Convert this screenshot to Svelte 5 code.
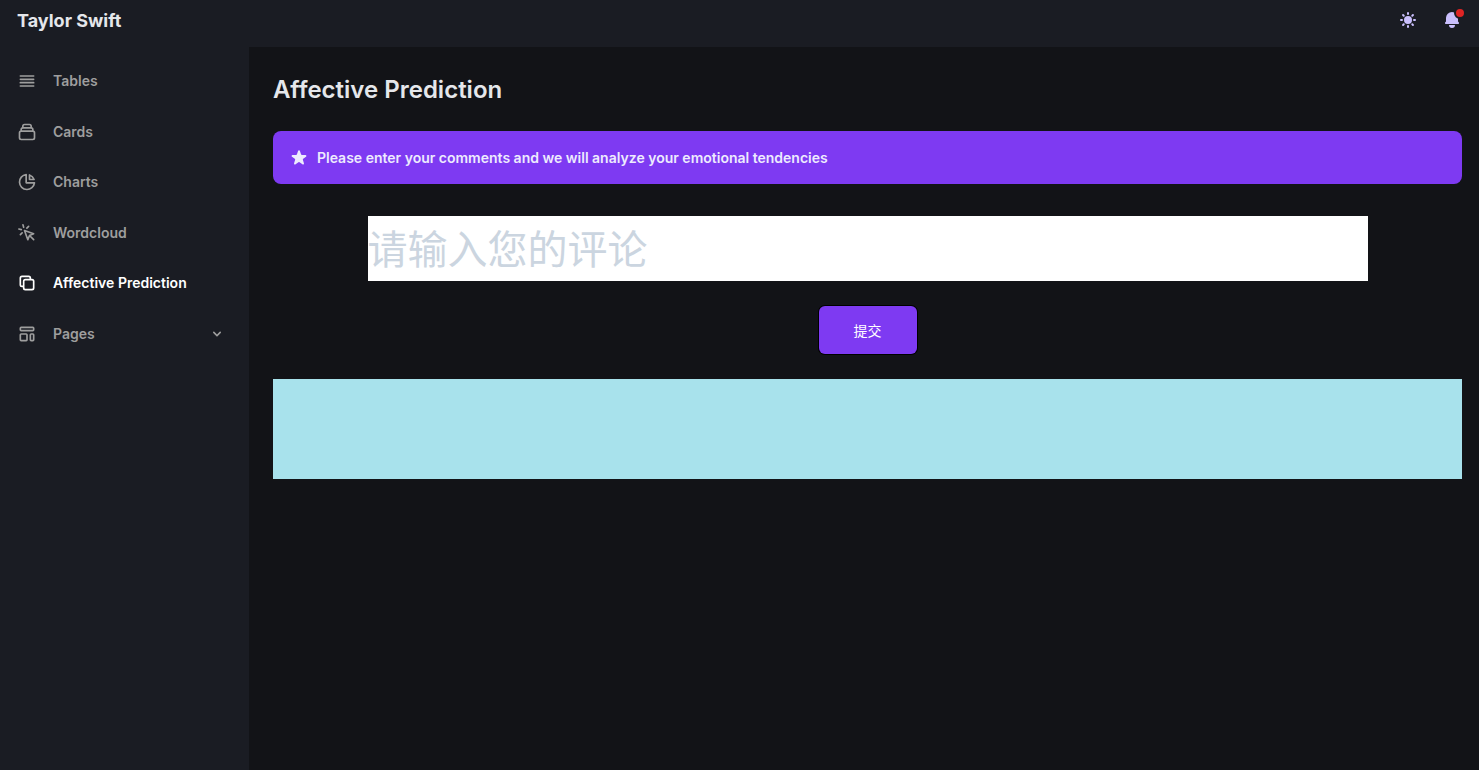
<script>
  const items = [
    { label: 'Tables', paths: ['M4 6h16M4 10h16M4 14h16M4 18h16'] },
    {
      label: 'Cards',
      paths: [
        'M19 11H5m14 0a2 2 0 012 2v6a2 2 0 01-2 2H5a2 2 0 01-2-2v-6a2 2 0 012-2m14 0V9a2 2 0 00-2-2M5 11V9a2 2 0 012-2m0 0V5a2 2 0 012-2h6a2 2 0 012 2v2M7 7h10'
      ]
    },
    {
      label: 'Charts',
      paths: [
        'M11 3.055A9.001 9.001 0 1020.945 13H11V3.055z',
        'M20.488 9H15V3.512A9.025 9.025 0 0120.488 9z'
      ]
    },
    {
      label: 'Wordcloud',
      paths: [
        'M15 15l-2 5L9 9l11 4-5 2zm0 0l5 5M7.188 2.239l.777 2.897M5.136 7.965l-2.898-.777M13.95 4.05l-2.122 2.122m-5.657 5.656l-2.12 2.122'
      ]
    },
    {
      label: 'Affective Prediction',
      active: true,
      paths: [
        'M8 16H6a2 2 0 01-2-2V6a2 2 0 012-2h8a2 2 0 012 2v2m-6 12h8a2 2 0 002-2v-8a2 2 0 00-2-2h-8a2 2 0 00-2 2v8a2 2 0 002 2z'
      ]
    }
  ];
  const pagesPath =
    'M4 5a1 1 0 011-1h14a1 1 0 011 1v2a1 1 0 01-1 1H5a1 1 0 01-1-1V5zM4 13a1 1 0 011-1h6a1 1 0 011 1v6a1 1 0 01-1 1H5a1 1 0 01-1-1v-6zM16 13a1 1 0 011-1h2a1 1 0 011 1v6a1 1 0 01-1 1h-2a1 1 0 01-1-1v-6z';
  let comment = $state('');
</script>

{#snippet lineIcon(paths)}
  <svg class="icon line" viewBox="0 0 24 24" aria-hidden="true">
    {#each paths as d}<path {d} />{/each}
  </svg>
{/snippet}

<div class="shell">
  <header>
    <a class="brand" href="#home">Taylor Swift</a>
    <div class="actions">
      <button class="icon-button" aria-label="Toggle color mode">
        <svg class="icon" viewBox="0 0 20 20" aria-hidden="true">
          <path fill-rule="evenodd" clip-rule="evenodd" d="M10 2a1 1 0 011 1v1a1 1 0 11-2 0V3a1 1 0 011-1zm4 8a4 4 0 11-8 0 4 4 0 018 0zm-.464 4.95l.707.707a1 1 0 001.414-1.414l-.707-.707a1 1 0 00-1.414 1.414zm2.12-10.607a1 1 0 010 1.414l-.706.707a1 1 0 11-1.414-1.414l.707-.707a1 1 0 011.414 0zM17 11a1 1 0 100-2h-1a1 1 0 100 2h1zm-7 4a1 1 0 011 1v1a1 1 0 11-2 0v-1a1 1 0 011-1zM5.05 6.464A1 1 0 106.465 5.05l-.708-.707a1 1 0 00-1.414 1.414l.707.707zm1.414 8.486l-.707.707a1 1 0 01-1.414-1.414l.707-.707a1 1 0 011.414 1.414zM4 11a1 1 0 100-2H3a1 1 0 000 2h1z" />
        </svg>
      </button>
      <button class="icon-button" aria-label="Notifications">
        <svg class="icon" viewBox="0 0 20 20" aria-hidden="true">
          <path d="M10 2a6 6 0 00-6 6v3.586l-.707.707A1 1 0 004 14h12a1 1 0 00.707-1.707L16 11.586V8a6 6 0 00-6-6zM10 18a3 3 0 01-3-3h6a3 3 0 01-3 3z" />
        </svg>
        <span class="badge"></span>
      </button>
    </div>
  </header>

  <div class="body">
    <nav>
      <ul>
        {#each items as item}
          <li>
            <a href="#{item.label}" class:active={item.active} aria-current={item.active ? 'page' : undefined}>
              {@render lineIcon(item.paths)}
              <span>{item.label}</span>
            </a>
          </li>
        {/each}
        <li>
          <button class="group" aria-expanded="false">
            {@render lineIcon([pagesPath])}
            <span>Pages</span>
            <svg class="chevron" viewBox="0 0 20 20" aria-hidden="true">
              <path fill-rule="evenodd" clip-rule="evenodd" d="M5.293 7.293a1 1 0 011.414 0L10 10.586l3.293-3.293a1 1 0 111.414 1.414l-4 4a1 1 0 01-1.414 0l-4-4a1 1 0 010-1.414z" />
            </svg>
          </button>
        </li>
      </ul>
    </nav>

    <main>
      <h1>Affective Prediction</h1>
      <div class="banner">
        <svg class="icon" viewBox="0 0 20 20" aria-hidden="true">
          <path d="M9.049 2.927c.3-.921 1.603-.921 1.902 0l1.07 3.292a1 1 0 00.95.69h3.462c.969 0 1.371 1.24.588 1.81l-2.8 2.034a1 1 0 00-.364 1.118l1.07 3.292c.3.921-.755 1.688-1.54 1.118l-2.8-2.034a1 1 0 00-1.175 0l-2.8 2.034c-.784.57-1.838-.197-1.539-1.118l1.07-3.292a1 1 0 00-.364-1.118L2.98 8.72c-.783-.57-.38-1.81.588-1.81h3.461a1 1 0 00.951-.69l1.07-3.292z" />
        </svg>
        <span>Please enter your comments and we will analyze your emotional tendencies</span>
      </div>
      <form onsubmit={(e) => e.preventDefault()}>
        <input type="text" bind:value={comment} placeholder="请输入您的评论" aria-label="请输入您的评论" />
        <button class="submit" type="submit">提交</button>
      </form>
      <output class="result"></output>
    </main>
  </div>
</div>

<style>
  :global(body) {
    margin: 0;
    background: #121317;
  }
  * {
    box-sizing: border-box;
  }
  .shell {
    display: flex;
    flex-direction: column;
    min-height: 100vh;
    font-family: Inter, 'Noto Sans CJK SC', sans-serif;
    font-size: 14px;
    line-height: 20px;
    color: #e5e7eb;
  }
  button,
  input {
    font: inherit;
    border: 0;
    margin: 0;
  }
  a {
    color: inherit;
    text-decoration: none;
  }
  button {
    cursor: pointer;
  }
  .icon {
    display: block;
    flex: none;
    width: 20px;
    height: 20px;
    fill: currentColor;
  }
  .line {
    fill: none;
    stroke: currentColor;
    stroke-width: 2;
    stroke-linecap: round;
    stroke-linejoin: round;
  }
  header {
    display: flex;
    align-items: flex-start;
    justify-content: space-between;
    height: 47px;
    padding: 7px 17px 0;
    background: #1a1c23;
  }
  .brand {
    font-size: 18px;
    line-height: 28px;
    font-weight: 700;
  }
  .actions {
    display: flex;
    gap: 24px;
    padding-top: 2px;
  }
  .icon-button {
    position: relative;
    padding: 0;
    background: none;
    color: #cabffd;
  }
  .icon-button:last-child {
    padding-top: 1px;
  }
  .badge {
    position: absolute;
    top: -2px;
    right: -4px;
    width: 12px;
    height: 12px;
    border: 2px solid #1a1c23;
    border-radius: 50%;
    background: #e02424;
  }
  .body {
    display: flex;
    flex: 1;
  }
  nav {
    flex: none;
    width: 249px;
    padding-top: 9px;
    background: #1a1c23;
    color: #9e9e9e;
    font-weight: 600;
  }
  ul {
    list-style: none;
    margin: 0;
    padding: 0;
  }
  li a,
  .group {
    display: flex;
    align-items: center;
    gap: 16px;
    width: 100%;
    padding: 15px 24px 15px 17px;
  }
  li:nth-child(odd) {
    padding-bottom: 1px;
  }
  .active {
    color: #ffffff;
  }
  .group {
    background: none;
    color: inherit;
  }
  .chevron {
    width: 16px;
    height: 16px;
    margin-left: auto;
    fill: currentColor;
  }
  main {
    flex: 1;
    min-width: 0;
    padding: 25px 17px 24px 24px;
    background: #121317;
  }
  h1 {
    margin: 0 0 23px;
    font-size: 24px;
    line-height: 36px;
    font-weight: 600;
  }
  .banner {
    display: flex;
    align-items: center;
    gap: 8px;
    padding: 16px;
    min-height: 53px;
    border-radius: 8px;
    background: #7e3af2;
    color: #edebfe;
    font-weight: 600;
  }
  form {
    display: flex;
    flex-direction: column;
    align-items: center;
    gap: 25px;
    padding: 32px 0 25px;
  }
  input {
    width: 100%;
    max-width: 1000px;
    height: 65px;
    padding: 2px 0 0;
    border-radius: 0;
    background: #ffffff;
    color: #121317;
    font-size: 40px;
  }
  input::placeholder {
    color: #cbd5e0;
    opacity: 1;
  }
  .submit {
    width: 98px;
    height: 48px;
    padding: 2px 0 0;
    border-radius: 6px;
    background: #7e3af2;
    color: #ffffff;
    box-shadow: 0 0 0 1px #000000;
  }
  .result {
    display: block;
    height: 100px;
    background: #a8e2ec;
  }
</style>
